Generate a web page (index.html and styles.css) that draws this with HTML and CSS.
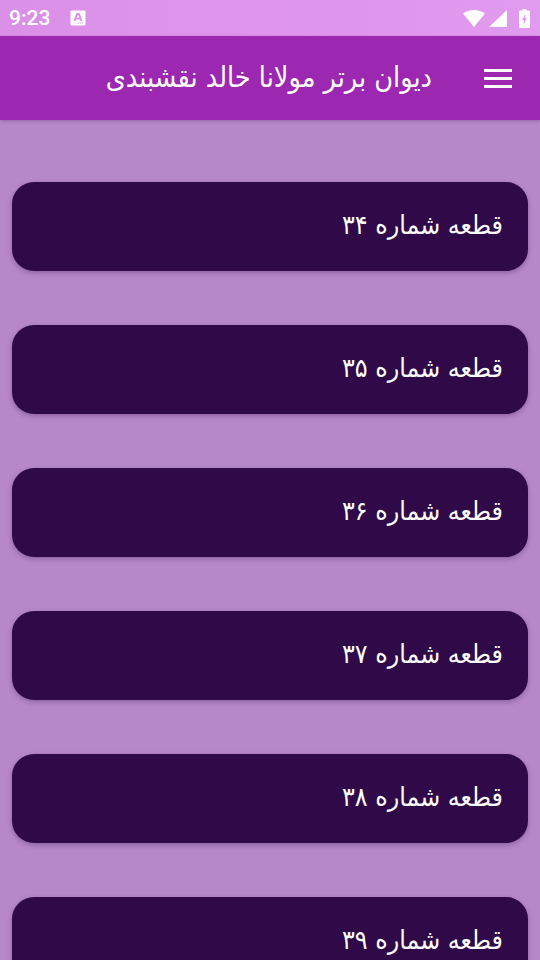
FILE: index.html
```html
<!DOCTYPE html>
<html lang="fa">

<head>
  <meta charset="UTF-8">
  <title>دیوان برتر مولانا خالد نقشبندی</title>
  <link rel="stylesheet" href="styles.css">
</head>

<body>
  <div class="status">
    <div class="status-left">
      <span class="clock">9:23</span>
      <svg class="note" width="16" height="16" viewBox="0 0 16 16">
        <path fill="#fff" fill-rule="evenodd" d="M1.500.5h13a1 1 0 0 1 1 1v13a1 1 0 0 1-1 1h-13a1 1 0 0 1-1-1v-13a1 1 0 0 1 1-1zM6.500 3 3.500 11h2l.5-1.500h4l.5 1.500h2L9.500 3zM6.700 7.800 8 4.800l1.300 3z"/>
        <path fill="#dc92ea" d="M8 12.500h1v1H8zM10 12.500h1v1h-1zM12 12.500h1v1h-1z"/>
      </svg>
    </div>
    <div class="status-right">
      <svg class="wifi" width="22" height="17" viewBox="0 0 22 17">
        <path fill="#fff" d="M0 3.600C3 1.300 6.800 0 11 0s8 1.300 11 3.600L11 17z"/>
      </svg>
      <svg class="signal" width="18" height="17" viewBox="0 0 18 17">
        <path fill="#fff" d="M18 0V17H0z"/>
      </svg>
      <svg class="battery" width="11" height="19" viewBox="0 0 11 19">
        <path fill="#fff" fill-rule="evenodd" d="M3.500 0h4v1.500h2.500a1 1 0 0 1 1 1V18a1 1 0 0 1-1 1H1a1 1 0 0 1-1-1V2.500a1 1 0 0 1 1-1h2.500zM6.800 4.500 3 11h2.200L4.300 16 8 9H5.800z"/>
      </svg>
    </div>
  </div>

  <div class="bar">
    <span class="bar-title">دیوان برتر مولانا خالد نقشبندی</span>
    <div class="menu">
      <i></i>
      <i></i>
      <i></i>
    </div>
  </div>

  <div class="list">
    <div class="card">قطعه شماره ۳۴</div>
    <div class="card">قطعه شماره ۳۵</div>
    <div class="card">قطعه شماره ۳۶</div>
    <div class="card">قطعه شماره ۳۷</div>
    <div class="card">قطعه شماره ۳۸</div>
    <div class="card">قطعه شماره ۳۹</div>
  </div>
</body>

</html>
```

FILE: styles.css
```css
* {
  margin: 0;
  padding: 0;
  box-sizing: border-box;
}
html, body {
  height: 100%;
  overflow: hidden;
}
body {
  background-color: #b688c9;
  font-family: "DejaVu Sans Condensed", "DejaVu Sans", sans-serif;
  color: #fff;
}

/* status bar */
.status {
  height: 36px;
  display: flex;
  justify-content: space-between;
  align-items: center;
  padding: 0 10px 0 9px;
  background: linear-gradient(90deg, #db90e8, #e09aee);
}
.status-left {
  display: flex;
  align-items: center;
  gap: 20px;
}
.clock {
  font-family: Roboto, sans-serif;
  font-size: 21px;
  font-weight: 500;
}
.status-right {
  display: flex;
  align-items: center;
}
.signal {
  margin: 0 12px 0 4px;
}

/* app bar */
.bar {
  height: 84px;
  display: flex;
  justify-content: flex-end;
  align-items: center;
  gap: 52px;
  padding: 0 28px 0 0;
  background-color: #9c27b0;
  box-shadow: 0 1px 3px rgba(60, 20, 80, 0.3);
  position: relative;
}
.bar-title {
  direction: rtl;
  font-size: 28.5px;
  line-height: 32px;
  white-space: nowrap;
}
.menu {
  width: 28px;
  margin-top: 1px;
  display: flex;
  flex-direction: column;
  gap: 5px;
}
.menu i {
  display: block;
  height: 3px;
  background-color: #fff;
}

/* list */
.list {
  display: flex;
  flex-direction: column;
  gap: 54px;
  padding: 62px 12px 0;
}
.card {
  flex: none;
  height: 89px;
  display: flex;
  align-items: center;
  direction: rtl;
  padding: 0 25px 5px;
  font-size: 26.5px;
  background-color: #2f0948;
  border-radius: 22px;
  box-shadow: 0 2px 5px rgba(50, 10, 70, 0.3);
}
```
